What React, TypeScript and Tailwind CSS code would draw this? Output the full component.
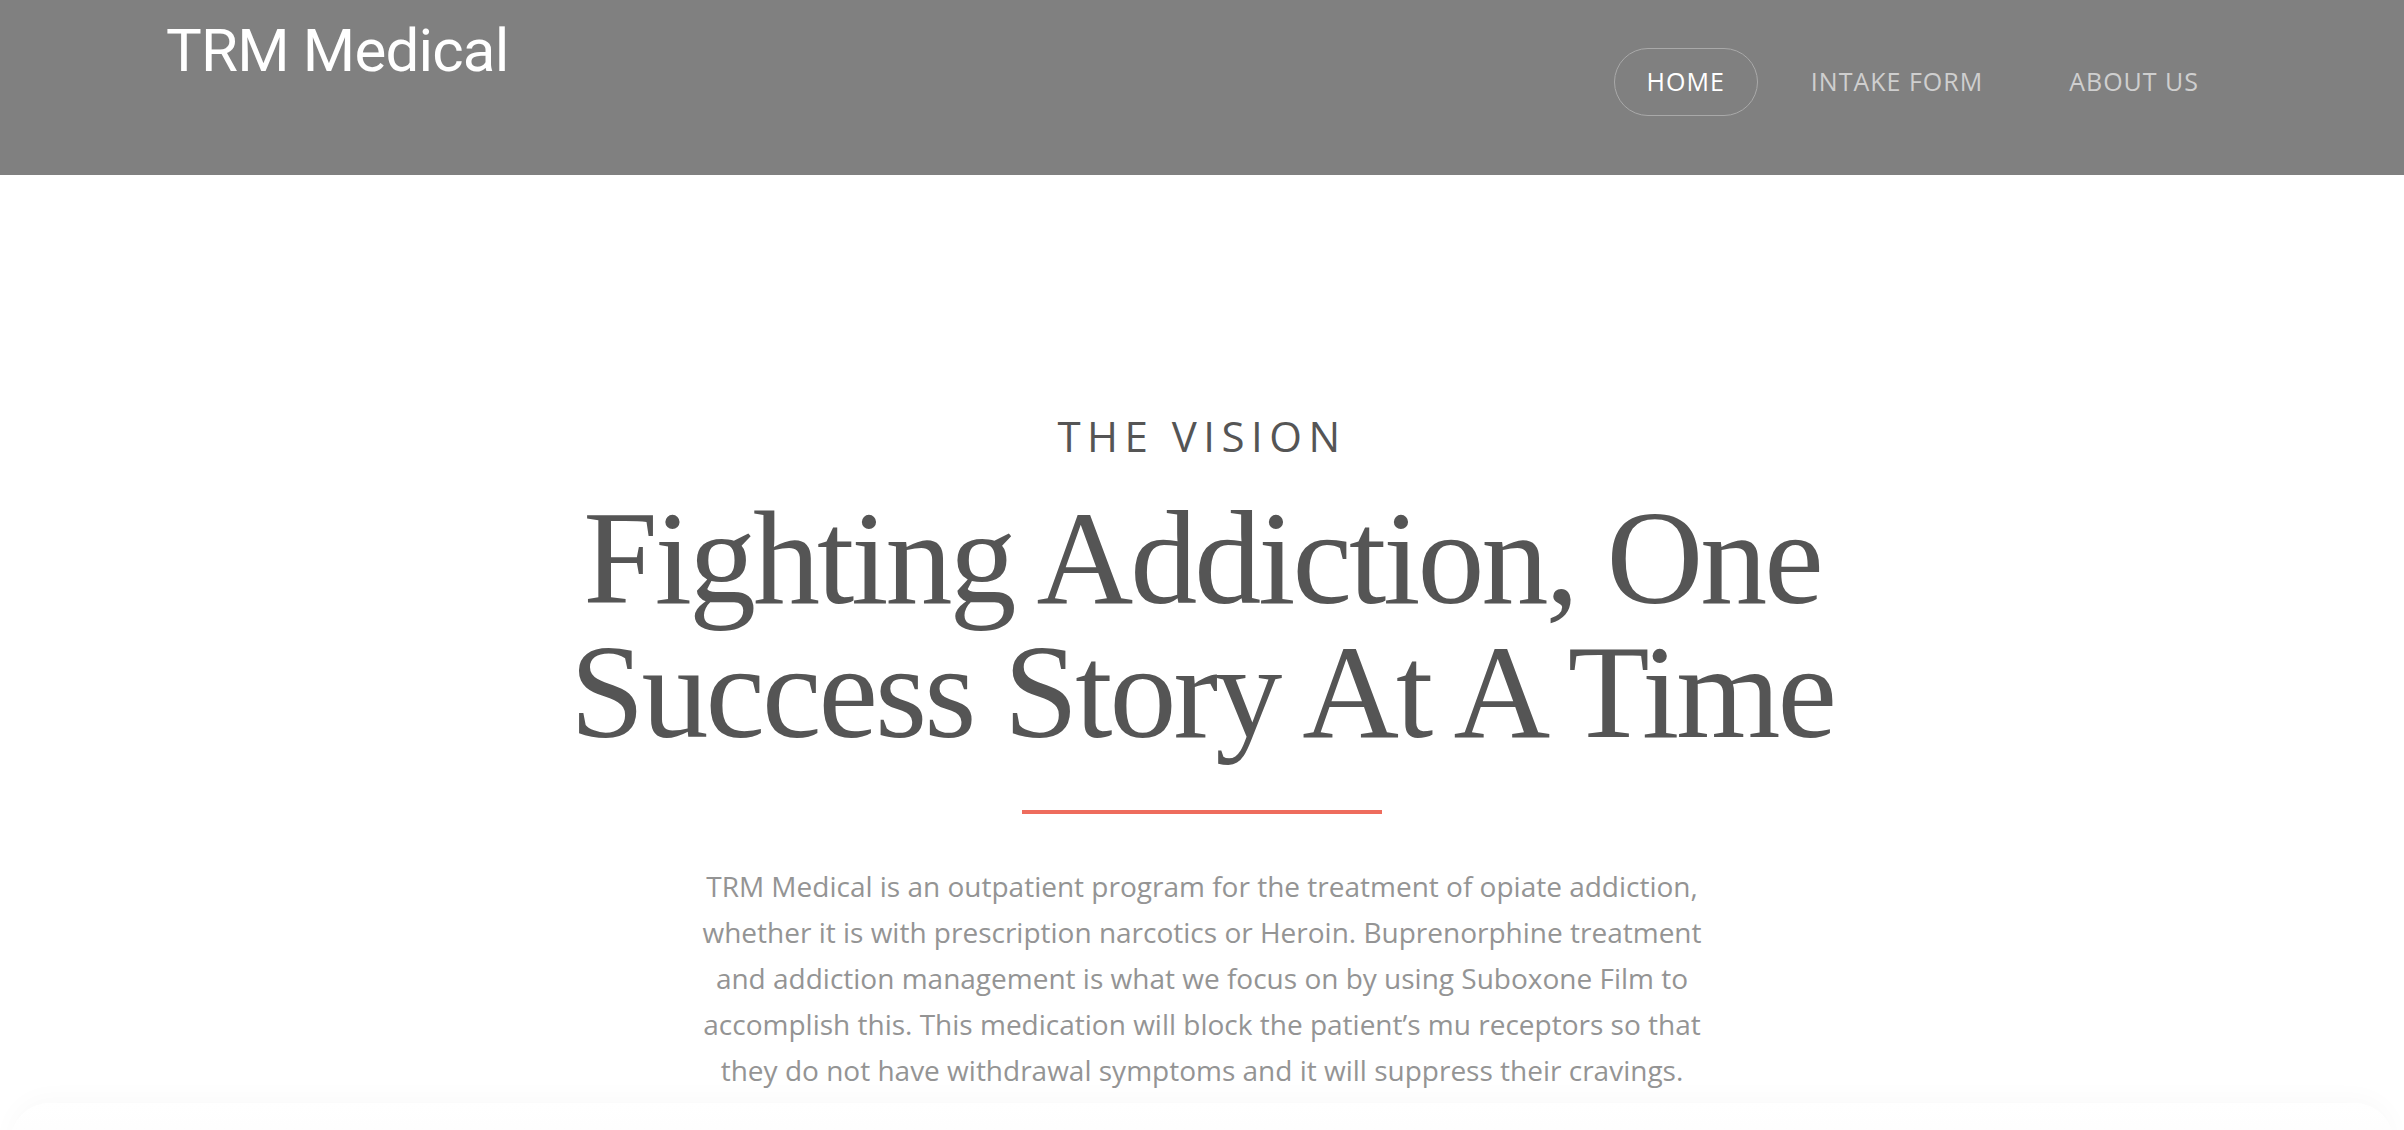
import * as React from 'react';

const navItems = [
  { label: 'HOME', active: true },
  { label: 'INTAKE FORM', active: false },
  { label: 'ABOUT US', active: false },
];

function Header() {
  return (
    <header className="h-[175px] bg-[#808080] flex justify-between items-start pl-[166px] pr-[172px]">
      <a
        href="#"
        className="mt-[21px] text-[60px] leading-none tracking-[-0.8px] text-white"
        style={{ fontFamily: 'Roboto, "Liberation Sans", sans-serif' }}
      >
        TRM Medical
      </a>
      <nav className="mt-[48px] flex items-center gap-5">
        {navItems.map((item) => (
          <a
            key={item.label}
            href="#"
            className={
              item.active
                ? 'h-[68px] px-8 flex items-center rounded-full border-[1.5px] border-[#a9a9a9] text-white text-[25px] tracking-[1px]'
                : 'h-[68px] px-8 flex items-center rounded-full border-[1.5px] border-transparent text-[#cfcfcf] text-[25px] tracking-[1px]'
            }
            style={{ fontFamily: '"Open Sans", sans-serif' }}
          >
            {item.label}
          </a>
        ))}
      </nav>
    </header>
  );
}

export default function App() {
  return (
    <div className="min-h-screen bg-white overflow-hidden">
      <Header />

      {/* Vision section */}
      <section className="flex flex-col items-center pt-[240px] text-center">
        <p
          className="text-[42px] leading-none tracking-[6.5px] text-[#555555]"
          style={{ fontFamily: '"Open Sans", sans-serif' }}
        >
          THE VISION
        </p>
        <h1
          className="mt-[34px] text-[134px] leading-[134px] tracking-[-3px] text-[#555555]"
          style={{ fontFamily: '"Liberation Serif", serif' }}
        >
          Fighting Addiction, One
          <br />
          Success Story At A Time
        </h1>
        <div className="mt-[51px] w-[360px] h-[4px] bg-[#ee6c5d]" />
        <p
          className="mt-[49px] w-[1040px] text-[28px] leading-[46px] text-[#949494]"
          style={{ fontFamily: '"Open Sans", sans-serif' }}
        >
          TRM Medical is an outpatient program for the treatment of opiate addiction, whether it is with
          prescription narcotics or Heroin. Buprenorphine treatment and addiction management is what we
          focus on by using Suboxone Film to accomplish this. This medication will block the patient’s mu
          receptors so that they do not have withdrawal symptoms and it will suppress their cravings.
        </p>
      </section>

      {/* next section peeking in */}
      <section className="mt-[10px] h-[200px] mx-[10px] rounded-t-[40px] bg-gradient-to-b from-white to-[#f7f7f7] shadow-[0_-6px_24px_rgba(0,0,0,0.025)]" />
    </div>
  );
}
